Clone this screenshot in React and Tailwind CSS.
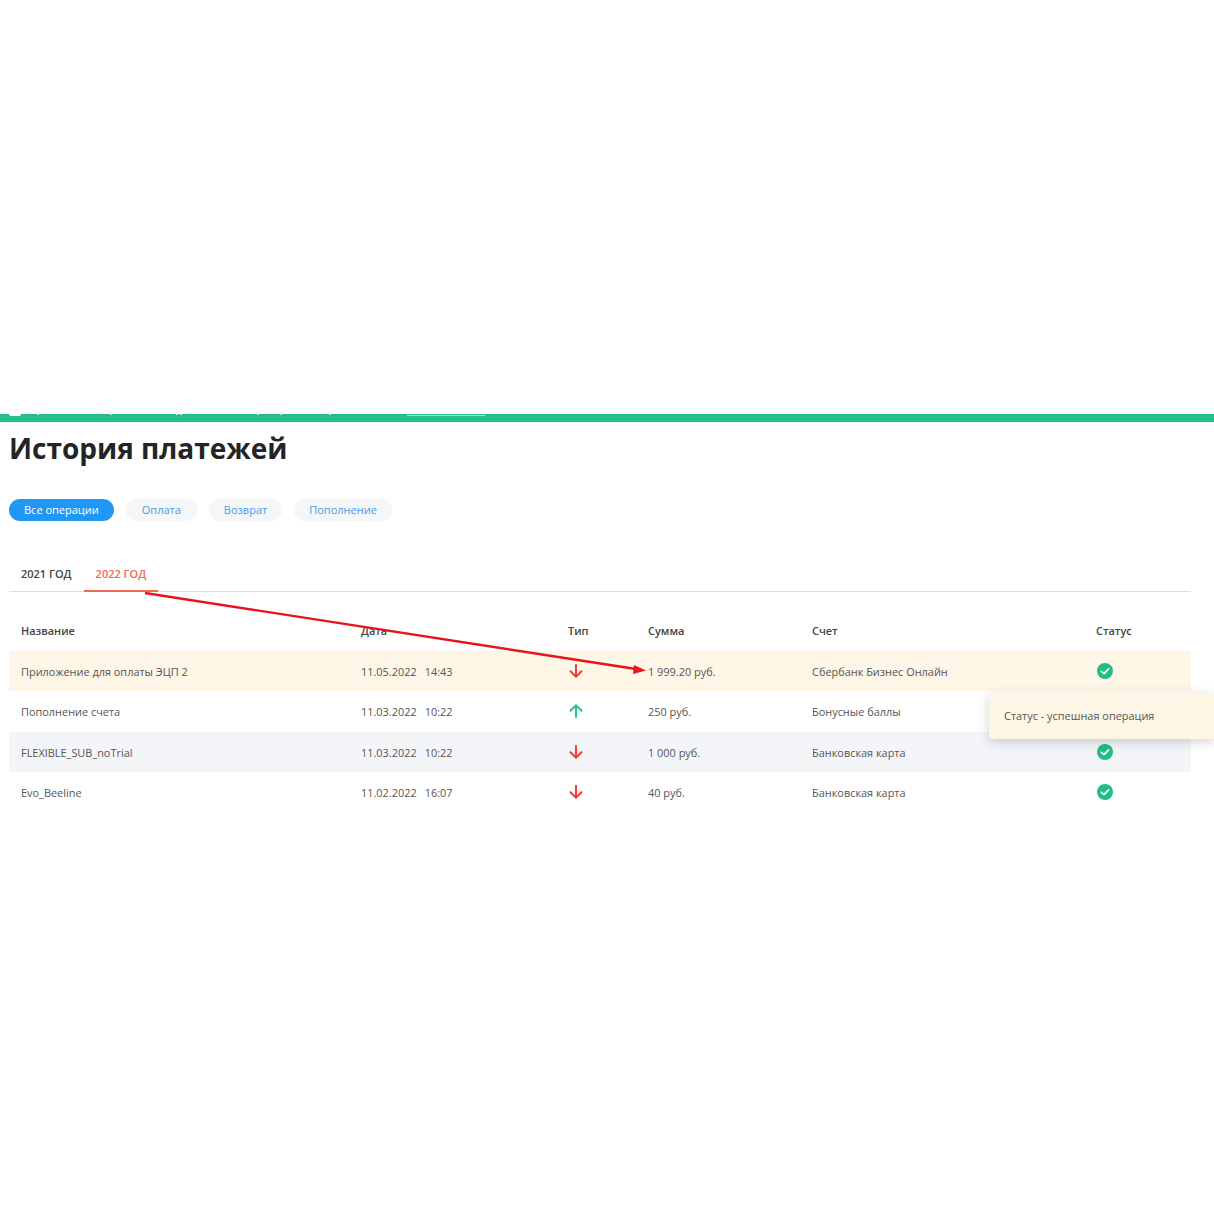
const font = { fontFamily: '"Open Sans", sans-serif' };

const rows = [
  { name: "Приложение для оплаты ЭЦП 2", date: "11.05.2022", time: "14:43", dir: "down", sum: "1 999.20 руб.", acc: "Сбербанк Бизнес Онлайн", bg: "bg-[#fef6e6]" },
  { name: "Пополнение счета", date: "11.03.2022", time: "10:22", dir: "up", sum: "250 руб.", acc: "Бонусные баллы", bg: "bg-white" },
  { name: "FLEXIBLE_SUB_noTrial", date: "11.03.2022", time: "10:22", dir: "down", sum: "1 000 руб.", acc: "Банковская карта", bg: "bg-[#f4f5f8]" },
  { name: "Evo_Beeline", date: "11.02.2022", time: "16:07", dir: "down", sum: "40 руб.", acc: "Банковская карта", bg: "bg-white" },
];

function Arrow({ dir }) {
  const color = dir === "up" ? "#2cc28c" : "#ee3b3b";
  return (
    <svg width="14" height="14" viewBox="0 0 14 14" fill="none" stroke={color} strokeWidth="2" strokeLinecap="round" strokeLinejoin="round">
      {dir === "up" ? <path d="M7 13V1.2M1.5 6.7L7 1.2L12.5 6.7" /> : <path d="M7 1V12.8M1.5 7.3L7 12.8L12.5 7.3" />}
    </svg>
  );
}

function Check() {
  return (
    <svg width="16" height="16" viewBox="0 0 17 17">
      <circle cx="8.5" cy="8.5" r="8.5" fill="#22bd85" />
      <path d="M4.6 8.8L7.4 11.2L12.4 6.3" fill="none" stroke="#fff" strokeWidth="1.8" strokeLinecap="round" strokeLinejoin="round" />
    </svg>
  );
}

const cols = "grid grid-cols-[352px_207px_80px_164px_284px_1fr]";
const ticks = ["left-[37px]", "left-[110px]", "left-[176px]", "left-[180px]", "left-[257px]", "left-[280px]", "left-[329px]"];

export default function App() {
  return (
    <div className="relative h-[1214px] overflow-hidden bg-white pt-[414px]" style={font}>
      <div className="relative h-2 bg-[#22bf87]">
        <span className="absolute left-[9px] top-0 h-[2px] w-[12px] rounded-b-[2px] bg-white" />
        {ticks.map((t) => (
          <span key={t} className={`absolute ${t} top-0 h-[1px] w-[2px] bg-white/70`} />
        ))}
        <span className="absolute left-[407px] top-[1px] h-[1px] w-[78px] bg-white/60" />
      </div>
      <div className="px-[9px]">
        <h1 className="mt-[7px] text-[28px] leading-[38px] font-bold text-[#222426]">История платежей</h1>

        <div className="mt-[32px] flex gap-[12px] text-[11px] leading-[22px]">
          <span className="rounded-full bg-[#2196f3] px-[15px] text-white">Все операции</span>
          <span className="rounded-full bg-[#f4f6f8] px-[16px] text-[#4a9ae8]">Оплата</span>
          <span className="rounded-full bg-[#f4f6f8] px-[15px] text-[#4a9ae8]">Возврат</span>
          <span className="rounded-full bg-[#f4f6f8] px-[15px] text-[#4a9ae8]">Пополнение</span>
        </div>

        <div className="mt-[34px] flex h-[37px] w-[1182px] border-b border-[#dddddd] text-[11px] font-semibold leading-[38px]">
          <span className="px-3 text-[#444444]">2021 ГОД</span>
          <span className="-mb-px border-b-2 border-[#ee6a50] px-3 text-[#ee6a50]">2022 ГОД</span>
        </div>

        <div className={`${cols} mt-[19px] w-[1182px] text-[10.93px] font-semibold leading-[40px] text-[#444444]`}>
          <span className="pl-3">Название</span>
          <span>Дата</span>
          <span>Тип</span>
          <span>Сумма</span>
          <span>Счет</span>
          <span>Статус</span>
        </div>

        <div className="w-[1182px]">
          {rows.map((r) => (
            <div key={r.name} className={`${cols} ${r.bg} h-[40.3px] items-center pt-[2px] text-[10.93px] text-[#555555]`}>
              <span className="pl-3">{r.name}</span>
              <span className="flex gap-[8px]"><span>{r.date}</span><span>{r.time}</span></span>
              <span className="-mt-[2px] flex pl-px"><Arrow dir={r.dir} /></span>
              <span>{r.sum}</span>
              <span>{r.acc}</span>
              <span className="-mt-[2px] flex pl-[1px]"><Check /></span>
            </div>
          ))}
        </div>
      </div>

      <div className="absolute left-[989px] top-[693px] flex h-[46px] w-[225px] items-center rounded-l-[3px] bg-[#fdf6e5] pl-[15px] text-[10.93px] text-[#555555] shadow-[0_3px_12px_rgba(0,0,0,0.18)]">
        Статус - успешная операция
      </div>
      <div className="absolute left-[1099px] top-[688px] h-0 w-0 border-x-[6px] border-b-[5px] border-x-transparent border-b-[#fdf6e5]" />

      <svg className="pointer-events-none absolute left-0 top-0" width="1214" height="1214" viewBox="0 0 1214 1214">
        <line x1="145" y1="593" x2="636" y2="669" stroke="#e8141c" strokeWidth="2.4" />
        <polygon points="646,670.5 634,665 633,674" fill="#e8141c" />
      </svg>
    </div>
  );
}
